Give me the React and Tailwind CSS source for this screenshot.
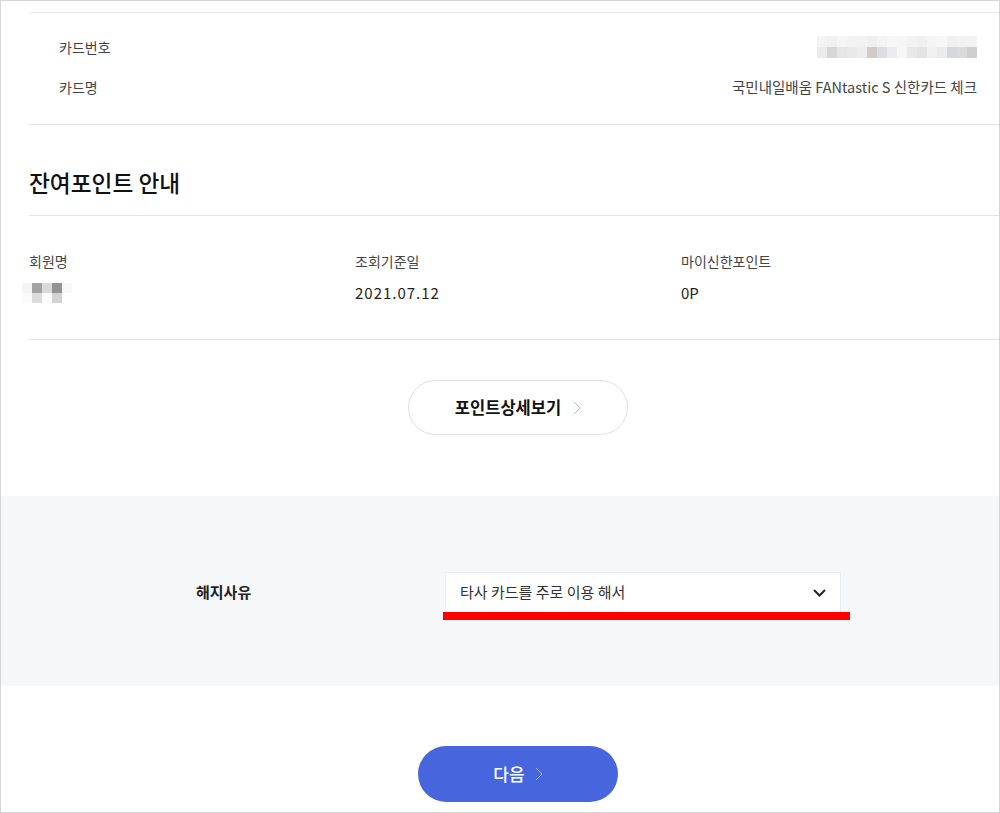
import React from 'react';

const cardBlur = [
  ['#f4f4f4', '#f1f1f1', '#f6f6f6', '#f3f3f3', '#f2f2f2', '#efefef', '#f4f4f4', '#f7f7f7', '#f6f6f6', '#f3f3f3', '#f1f1f1', '#f5f5f5', '#f7f7f7', '#f0f0f0', '#f2f2f2', '#f3f3f3'],
  ['#ebebeb', '#d6d6d6', '#e6e6e6', '#e9e9e9', '#ededed', '#cfcbc9', '#dcdde0', '#ececec', '#f6f6f6', '#e8e8e8', '#e3e3e3', '#f0f0f0', '#ebebeb', '#d5d7da', '#dadada', '#cfcfcf'],
];

const nameBlur = [
  ['#f5f5f5', '#a3a3a3', '#dadada', '#939393', '#f8f8f8'],
  ['#fafafa', '#dcdcdc', '#fcfcfc', '#d2d2d2', '#ffffff'],
];

// pixelated (mosaic) area, as in the original capture
const Mosaic = ({ rows, cell, h }) => (
  <svg width={rows[0].length * cell} height={rows.length * h}>
    {rows.map((row, r) =>
      row.map((c, i) => <rect key={`${r}-${i}`} x={i * cell} y={r * h} width={cell} height={h} fill={c} />)
    )}
  </svg>
);

const Chevron = ({ className }) => (
  <svg className={className} width="8" height="14" viewBox="0 0 8 14" fill="none">
    <polyline points="1,1 7,7 1,13" stroke="currentColor" strokeWidth="1" />
  </svg>
);

const App = () => {
  return (
    <div className="w-[1000px] h-[813px] border border-[#d4d4d4] bg-white overflow-hidden font-['Noto_Sans_CJK_KR',sans-serif]">
      <div className="pl-[28px] pt-[11px]">
        <div className="w-[978px]">
          {/* card info */}
          <div className="border-t border-b border-t-[#ebebeb] border-b-[#e3e3e3] px-[30px] pt-[24px] pb-[27px] flex flex-col gap-[20px] text-[14px] leading-[20px]">
            <div className="flex justify-between items-center h-[20px]">
              <span className="text-[#444]">카드번호</span>
              <Mosaic rows={cardBlur} cell={10} h={11} />
            </div>
            <div className="flex justify-between items-center h-[20px]">
              <span className="text-[#444]">카드명</span>
              <span className="text-[#444] text-[14.5px]">국민내일배움 FANtastic S 신한카드 체크</span>
            </div>
          </div>

          {/* remaining points */}
          <h2 className="pt-[43px] pb-[17px] text-[22.7px] leading-[30px] font-medium text-[#111]">잔여포인트 안내</h2>
          <div className="border-t border-b border-[#e3e3e3] pt-[35px] pb-[36px] grid grid-cols-[326px_326px_1fr] text-[14px] leading-[20px]">
            <div className="flex flex-col gap-[12px]">
              <span className="text-[#444]">회원명</span>
              <div className="h-[20px] flex items-center -ml-[7px]">
                <Mosaic rows={nameBlur} cell={10} h={10} />
              </div>
            </div>
            <div className="flex flex-col gap-[12px]">
              <span className="text-[#444]">조회기준일</span>
              <span className="text-[#222] text-[15px] tracking-[1px]">2021.07.12</span>
            </div>
            <div className="flex flex-col gap-[12px]">
              <span className="text-[#444]">마이신한포인트</span>
              <span className="text-[#222] text-[15px]">0P</span>
            </div>
          </div>

          <div className="pt-[40px] pb-[61px] flex justify-center">
            <button className="w-[220px] h-[55px] rounded-full border border-[#e0e0e0] bg-white flex items-center justify-center gap-[12px] text-[16.5px] font-bold text-[#111]">
              포인트상세보기
              <Chevron className="text-[#bdbdbd]" />
            </button>
          </div>
        </div>
      </div>

      {/* reason */}
      <div className="h-[190px] bg-[#f6f7f9] pt-[76px] pl-[28px]">
        <div className="w-[978px] flex items-center pl-[167px]">
          <span className="w-[249px] text-[15px] font-bold text-[#222]">해지사유</span>
          <div className="relative w-[396px] h-[41px] bg-white border border-[#ececec] flex items-center justify-between pl-[14px] pr-[14px] text-[15px] text-[#333]">
            <span>타사 카드를 주로 이용 해서</span>
            <svg width="13" height="8" viewBox="0 0 13 8" fill="none">
              <polyline points="1,1 6.5,6.5 12,1" stroke="#222" strokeWidth="2" />
            </svg>
            <div className="absolute -left-[3px] -right-[10px] top-full h-[8px] bg-[#ff0000]" />
          </div>
        </div>
      </div>

      <div className="pl-[28px] pt-[60px]">
        <div className="w-[978px] flex justify-center">
          <button className="w-[200px] h-[56px] rounded-full bg-[#4766dd] flex items-center justify-center gap-[10px] text-[17px] font-medium text-white">
            다음
            <Chevron className="text-[#a9b8ef]" />
          </button>
        </div>
      </div>
    </div>
  );
};

export default App;
